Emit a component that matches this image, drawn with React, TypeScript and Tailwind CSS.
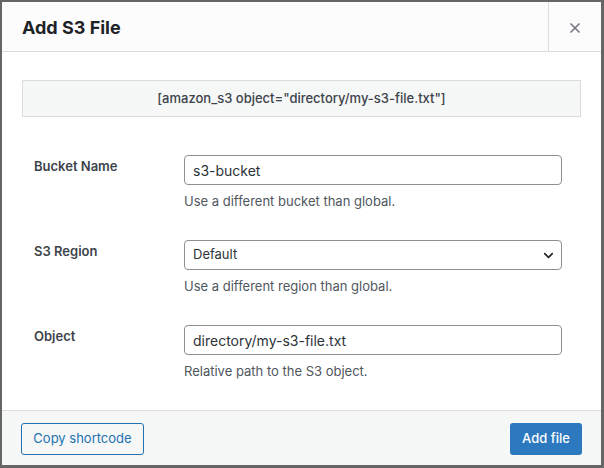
import { ChevronDown, X } from 'lucide-react'

const fields = [
  { label: 'Bucket Name', value: 's3-bucket', help: 'Use a different bucket than global.', kind: 'input' },
  { label: 'S3 Region', value: 'Default', help: 'Use a different region than global.', kind: 'select' },
  { label: 'Object', value: 'directory/my-s3-file.txt', help: 'Relative path to the S3 object.', kind: 'input' },
]

function Field({ label, value, help, kind }: (typeof fields)[number]) {
  return (
    <div className="flex h-[85px] items-start">
      <div className="w-[162px] pl-[12px] pt-[2px] text-[13px] font-semibold leading-[18px] text-[#3c434a]">{label}</div>
      <div className="flex w-[378px] flex-col gap-[7px]">
        {kind === 'select' ? (
          <div className="flex h-[30px] items-center justify-between rounded-[4px] border border-[#8c8f94] bg-white pl-[8px] pr-[5px] text-[13px] text-[#2c3338]">
            <span>{value}</span>
            <ChevronDown size={15} strokeWidth={2.6} className="text-[#1d2327]" />
          </div>
        ) : (
          <div className="flex h-[30px] items-center rounded-[4px] border border-[#8c8f94] bg-white px-[8px] text-[14px] text-[#2c3338]">
            {value}
          </div>
        )}
        <p className="text-[13px] leading-[18px] text-[#50575e]">{help}</p>
      </div>
    </div>
  )
}

export default function App() {
  return (
    <div className="h-[468px] w-[604px] bg-[#666666] pb-[3px] pl-[2px] pr-[3px] pt-[2px] font-['Inter',sans-serif]">
      <div className="flex h-full flex-col bg-white">
        <header className="flex h-[54px] items-stretch border-b border-[#dcdcde] bg-[#fcfcfc]">
          <h1 className="flex flex-1 items-center pl-[20px] pt-[2px] text-[18px] font-bold text-[#1d2327]">Add S3 File</h1>
          <button className="flex w-[53px] items-center justify-center border-l border-[#dcdcde] pt-[2px] text-[#787c82]">
            <X size={16} strokeWidth={2.6} />
          </button>
        </header>

        <div className="flex flex-1 flex-col px-[20px] pt-[28px]">
          <div className="flex h-[37px] items-center justify-center border border-[#dcdcde] bg-[#f6f7f7] text-[13px] font-medium text-[#3c434a]">
            [amazon_s3 object="directory/my-s3-file.txt"]
          </div>
          <div className="mt-[38px] flex flex-col">
            {fields.map((f) => (
              <Field key={f.label} {...f} />
            ))}
          </div>
        </div>

        <footer className="flex h-[59px] items-center justify-between border-t border-[#dcdcde] bg-[#f6f7f7] px-[19px] pt-[1px]">
          <button className="h-[32px] w-[123px] rounded-[3px] border border-[#2271b1] bg-[#f6f7f7] text-[13px] text-[#2271b1]">
            Copy shortcode
          </button>
          <button className="h-[32px] w-[72px] rounded-[3px] bg-[#2c79bf] text-[13px] font-medium text-white">
            Add file
          </button>
        </footer>
      </div>
    </div>
  )
}
